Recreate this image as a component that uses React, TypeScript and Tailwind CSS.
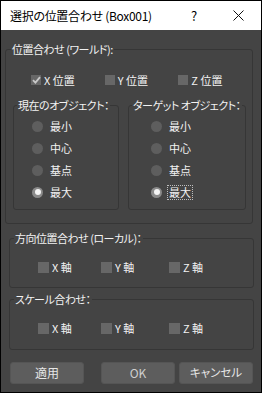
const font = { fontFamily: '"Noto Sans CJK JP", "Noto Sans", sans-serif' };

function CheckBox({ label, checked, size }: { label: string; checked?: boolean; size: "sm" | "md" }) {
  return (
    <div className="flex h-[16px] items-center gap-[3px]">
      <span
        className={
          size === "sm"
            ? "flex h-[10px] w-[10px] items-center justify-center bg-[#676767]"
            : "flex h-[11px] w-[11px] items-center justify-center bg-[#676767]"
        }
      >
        {checked && (
          <svg width="9" height="8" viewBox="0 0 9 8">
            <path d="M1 4.2 L3.4 6.6 L8 1.2" fill="none" stroke="#c8c8c8" strokeWidth="1.8" />
          </svg>
        )}
      </span>
      <span className="whitespace-nowrap text-[11px] leading-[16px] text-[#f2f2f2]">{label}</span>
    </div>
  );
}

function Radio({ label, selected, focus }: { label: string; selected?: boolean; focus?: boolean }) {
  return (
    <div className="flex h-[16px] items-center gap-[6px]">
      <span
        className={
          selected
            ? "flex h-[11px] w-[11px] items-center justify-center rounded-full bg-[#8a8a8a]"
            : "h-[11px] w-[11px] rounded-full bg-[#5e5e5e]"
        }
      >
        {selected && <span className="h-[6px] w-[6px] rounded-full bg-[#f4f4f4]" />}
      </span>
      <span
        className={
          focus
            ? "px-[1px] text-[11px] leading-[13px] text-[#f2f2f2] outline outline-1 outline-dotted outline-[#bdbdbd]"
            : "px-[1px] text-[11px] leading-[16px] text-[#f2f2f2]"
        }
      >
        {label}
      </span>
    </div>
  );
}

function Legend({ text, indent }: { text: string; indent: string }) {
  return (
    <div
      className={`-mt-[9px] w-fit whitespace-nowrap bg-[#444444] px-px text-[11px] leading-[16px] tracking-[-0.5px] text-[#f2f2f2] ${indent}`}
    >
      {text}
    </div>
  );
}

export default function App() {
  return (
    <div
      style={font}
      className="flex h-[393px] w-[262px] flex-col border border-black bg-[#444444] [font-feature-settings:'palt']"
    >
      {/* title bar */}
      <div className="flex h-[29px] shrink-0 items-center bg-white">
        <div className="flex-1 pl-[9px] text-[12px] leading-[16px] tracking-[-0.3px] text-black">
          選択の位置合わせ (Box001)
        </div>
        <div className="flex h-full w-[46px] items-center justify-center pl-[4px] text-[13px] text-black">?</div>
        <div className="flex h-full w-[46px] items-center justify-center">
          <svg width="11" height="11" viewBox="0 0 11 11">
            <path d="M0.5 0.5 L10.5 10.5 M10.5 0.5 L0.5 10.5" stroke="#111" strokeWidth="1" />
          </svg>
        </div>
      </div>

      {/* world alignment */}
      <div className="ml-[4px] mt-[19px] flex h-[175px] w-[248px] flex-col rounded-[3px] border border-[#363636]">
        <Legend text="位置合わせ (ワールド):" indent="ml-[5px]" />
        <div className="mt-[15px] flex pl-[25px]">
          <div className="w-[75px]">
            <CheckBox label="X 位置" checked size="sm" />
          </div>
          <div className="w-[75px]">
            <CheckBox label="Y 位置" size="sm" />
          </div>
          <div className="w-[75px]">
            <CheckBox label="Z 位置" size="sm" />
          </div>
        </div>
        <div className="ml-[7px] mt-[17px] flex gap-[9px]">
          <div className="flex h-[105px] w-[106px] flex-col rounded-[3px] border border-[#363636]">
            <Legend text="現在のオブジェクト：" indent="ml-[3px]" />
            <div className="mt-[5px] flex flex-col gap-[6px] pl-[18px]">
              <Radio label="最小" />
              <Radio label="中心" />
              <Radio label="基点" />
              <Radio label="最大" selected />
            </div>
          </div>
          <div className="flex h-[105px] w-[118px] flex-col rounded-[3px] border border-[#363636]">
            <Legend text="ターゲット オブジェクト：" indent="ml-[3px]" />
            <div className="mt-[5px] flex flex-col gap-[6px] pl-[22px]">
              <Radio label="最小" />
              <Radio label="中心" />
              <Radio label="基点" />
              <Radio label="最大" selected focus />
            </div>
          </div>
        </div>
      </div>

      {/* local orientation */}
      <div className="ml-[8px] mt-[14px] flex h-[50px] w-[245px] flex-col rounded-[3px] border border-[#363636]">
        <Legend text="方向位置合わせ (ローカル)：" indent="ml-[4px]" />
        <div className="mt-[13px] flex pl-[28px]">
          <div className="w-[63px]">
            <CheckBox label="X 軸" size="md" />
          </div>
          <div className="w-[68px]">
            <CheckBox label="Y 軸" size="md" />
          </div>
          <div>
            <CheckBox label="Z 軸" size="md" />
          </div>
        </div>
      </div>

      {/* scale */}
      <div className="ml-[8px] mt-[11px] flex h-[51px] w-[245px] flex-col rounded-[3px] border border-[#363636]">
        <Legend text="スケール合わせ：" indent="ml-[4px]" />
        <div className="mt-[13px] flex pl-[28px]">
          <div className="w-[63px]">
            <CheckBox label="X 軸" size="md" />
          </div>
          <div className="w-[68px]">
            <CheckBox label="Y 軸" size="md" />
          </div>
          <div>
            <CheckBox label="Z 軸" size="md" />
          </div>
        </div>
      </div>

      {/* buttons */}
      <div className="ml-[9px] mt-[12px] flex">
        <button className="h-[22px] w-[74px] rounded-[3px] border border-[#555] bg-[#5d5d5d] text-[12px] text-[#e6e6e6]">
          適用
        </button>
        <button className="ml-[17px] h-[22px] w-[74px] rounded-[3px] border border-[#555] bg-[#5d5d5d] text-[12px] text-[#cfcfcf]">
          OK
        </button>
        <button className="ml-[4px] h-[22px] w-[74px] rounded-[3px] border border-[#555] bg-[#5d5d5d] text-[11.5px] text-[#e6e6e6]">
          キャンセル
        </button>
      </div>
    </div>
  );
}
